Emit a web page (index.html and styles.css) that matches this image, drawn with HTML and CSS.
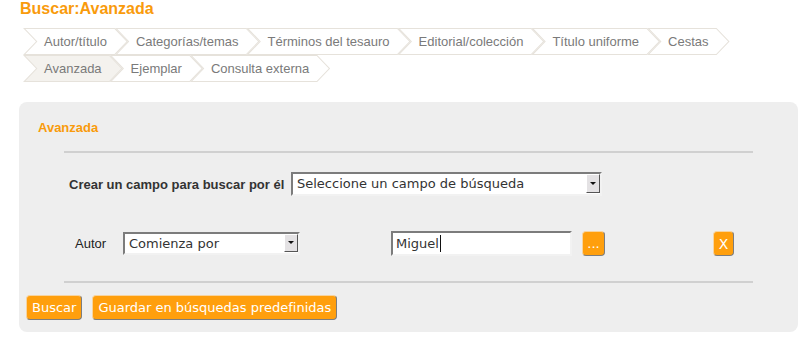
FILE: index.html
```html
<!DOCTYPE html>
<html lang="es">
<head>
<meta charset="utf-8">
<title>Buscar:Avanzada</title>
<link rel="stylesheet" href="styles.css">
</head>
<body>
<h1 class="page-title">Buscar:Avanzada</h1>
<nav class="tabs">
  <a class="tab">Autor/título</a>
  <a class="tab">Categorías/temas</a>
  <a class="tab">Términos del tesauro</a>
  <a class="tab">Editorial/colección</a>
  <a class="tab">Título uniforme</a>
  <a class="tab">Cestas</a>
  <a class="tab tab-active">Avanzada</a>
  <a class="tab">Ejemplar</a>
  <a class="tab">Consulta externa</a>
</nav>
<section class="panel">
  <h2 class="panel-title">Avanzada</h2>
  <div class="rule"></div>
  <div class="row row-create">
    <span class="lbl-strong">Crear un campo para buscar por él</span>
    <div class="select select-wide"><span class="select-text">Seleccione un campo de búsqueda</span><span class="select-arrow"></span></div>
  </div>
  <div class="row row-field">
    <span class="lbl">Autor</span>
    <div class="select select-op"><span class="select-text">Comienza por</span><span class="select-arrow"></span></div>
    <div class="textbox">Miguel<span class="caret"></span></div>
    <button class="btn btn-dots">...</button>
    <button class="btn btn-x">X</button>
  </div>
  <div class="rule rule-bottom"></div>
  <div class="actions">
    <button class="btn btn-main">Buscar</button>
    <button class="btn btn-main">Guardar en búsquedas predefinidas</button>
  </div>
</section>
</body>
</html>
```
FILE: styles.css
```css
html, body {
  margin: 0;
  padding: 0;
  background: #ffffff;
}
body {
  font-family: "Liberation Sans", Arial, sans-serif;
  width: 805px;
}
.page-title {
  margin: 0;
  padding: 0 0 0 20px;
  font-size: 16px;
  line-height: 18px;
  font-weight: bold;
  color: #f99b0c;
}
.tabs {
  display: flex;
  flex-wrap: wrap;
  margin: 10px 60px 0 23px;
}
.tab {
  position: relative;
  z-index: 0;
  display: block;
  height: 27px;
  line-height: 27px;
  padding: 0 21px;
  margin-right: -13px;
  font-size: 13px;
  color: #7a7a7a;
  white-space: nowrap;
}
.tab::before,
.tab::after {
  content: "";
  position: absolute;
  inset: 0;
  z-index: -1;
}
.tab::before {
  background: #e6e2db;
  clip-path: polygon(0 0, calc(100% - 13px) 0, 100% 50%, calc(100% - 13px) 100%, 0 100%, 13px 50%);
}
.tab::after {
  background: #ffffff;
  clip-path: polygon(2.4px 1px, calc(100% - 13.4px) 1px, calc(100% - 1.4px) 50%, calc(100% - 13.4px) calc(100% - 1px), 2.4px calc(100% - 1px), 14.4px 50%);
}
.tab-active::after {
  background: #f4f2ee;
}
.panel {
  margin: 20px 7px 0 19px;
  height: 230px;
  box-sizing: border-box;
  padding: 18px 0 0 0;
  background: #eeeeee;
  border-radius: 8px;
}
.panel-title {
  margin: 0 0 0 19px;
  font-size: 13px;
  line-height: 15px;
  font-weight: bold;
  color: #f99b0c;
}
.rule {
  margin: 16px 45px 0 45px;
  height: 2px;
  background: #d0d0d0;
}
.rule-bottom {
  margin-top: 25px;
}
.row {
  display: flex;
  align-items: center;
}
.row-create {
  margin: 19px 0 0 50px;
}
.lbl-strong {
  font-size: 13px;
  font-weight: bold;
  color: #333333;
  width: 222px;
}
.select {
  position: relative;
  display: flex;
  align-items: center;
  box-sizing: border-box;
  height: 24px;
  background: #ffffff;
  border-style: solid;
  border-width: 2px;
  border-color: #7c7c7c #f2f2f2 #f2f2f2 #7c7c7c;
  font-family: "DejaVu Sans", sans-serif;
  font-size: 13px;
  color: #333333;
}
.select-text {
  padding-left: 4px;
  line-height: 20px;
}
.select-wide {
  width: 311px;
}
.select-op {
  width: 177px;
  height: 23px;
}
.select-arrow {
  position: absolute;
  right: 0;
  top: 0;
  bottom: 1px;
  width: 14px;
  box-sizing: border-box;
  background: #e4e2e4;
  border-style: solid;
  border-width: 1px;
  border-color: #ffffff #555555 #555555 #ffffff;
}
.select-arrow::after {
  content: "";
  position: absolute;
  left: 3px;
  top: 50%;
  margin-top: -2px;
  border-left: 3px solid transparent;
  border-right: 3px solid transparent;
  border-top: 3px solid #111111;
}
.row-field {
  margin: 35px 0 0 56px;
}
.lbl {
  font-size: 13px;
  color: #222222;
  width: 48px;
}
.textbox {
  display: flex;
  align-items: center;
  box-sizing: border-box;
  width: 181px;
  height: 25px;
  margin-left: 91px;
  padding-left: 3px;
  background: #ffffff;
  border-style: solid;
  border-width: 2px;
  border-color: #7c7c7c #f2f2f2 #f2f2f2 #7c7c7c;
  font-family: "DejaVu Sans", sans-serif;
  font-size: 13px;
  color: #333333;
}
.caret {
  display: inline-block;
  width: 1px;
  height: 17px;
  margin-left: 1px;
  background: #111111;
}
.btn {
  box-sizing: border-box;
  height: 25px;
  margin: 0;
  padding: 0 5px;
  background: #ff9f0d;
  color: #ffffff;
  font-family: "DejaVu Sans", sans-serif;
  font-size: 13px;
  line-height: 22px;
  border-style: solid;
  border-width: 1px;
  border-color: #f7d4a0 #7d7d7d #7d7d7d #f7d4a0;
  border-radius: 4px;
}
.btn-dots {
  width: 23px;
  padding: 0;
  margin-left: 10px;
}
.btn-x {
  width: 21px;
  padding: 0;
  margin-left: 108px;
  font-size: 14px;
}
.actions {
  display: flex;
  gap: 10px;
  margin: 12px 0 0 7px;
}
.btn-main {
  height: 25px;
}
```
